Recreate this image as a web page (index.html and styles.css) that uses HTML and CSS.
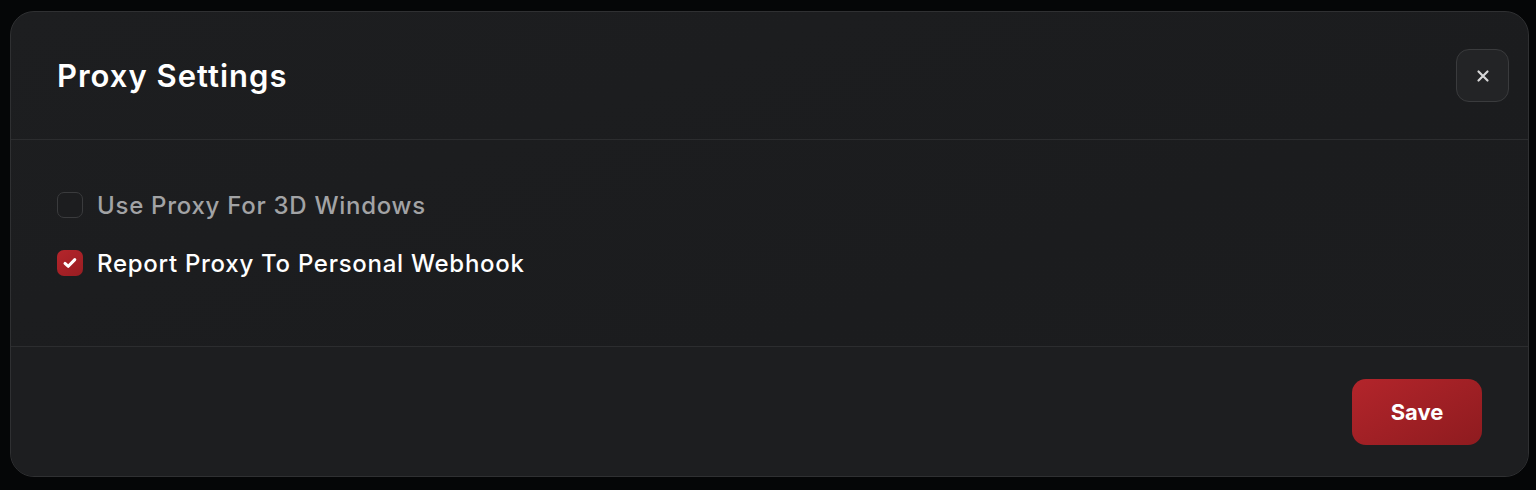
FILE: index.html
```html
<!DOCTYPE html>
<html lang="en">
<head>
<meta charset="utf-8">
<title>Proxy Settings</title>
<link rel="stylesheet" href="styles.css">
</head>
<body>
<div class="modal">
  <div class="modal-header">
    <h2 class="title">Proxy Settings</h2>
    <button class="close" aria-label="Close">
      <svg width="14" height="14" viewBox="0 0 14 14"><path d="M2.5 2.5 L11.5 11.5 M11.5 2.5 L2.5 11.5" stroke="#d6d6d7" stroke-width="2.2" stroke-linecap="round"/></svg>
    </button>
  </div>
  <div class="modal-body">
    <label class="option">
      <span class="box"></span>
      <span class="label muted">Use Proxy For 3D Windows</span>
    </label>
    <label class="option">
      <span class="box checked">
        <svg width="16" height="14" viewBox="0 0 16 14"><path d="M3 7.4 L6.3 10.3 L12.8 3.6" fill="none" stroke="#ffffff" stroke-width="3" stroke-linecap="round" stroke-linejoin="round"/></svg>
      </span>
      <span class="label">Report Proxy To Personal Webhook</span>
    </label>
  </div>
  <div class="modal-footer">
    <button class="save">Save</button>
  </div>
</div>
</body>
</html>
```
FILE: styles.css
```css
* { box-sizing: border-box; }
html, body { margin: 0; height: 100%; }
body {
  background: #050607;
  padding: 11px 7px 0 10px;
  font-family: Inter, "Noto Sans", sans-serif;
  overflow: hidden;
}
.modal {
  height: 466px;
  border: 1px solid #2f3032;
  border-radius: 24px;
  background: linear-gradient(160deg, #1d1e20 0%, #1b1c1e 60%, #1c1d1f 100%);
  display: flex;
  flex-direction: column;
  overflow: hidden;
}
.modal-header {
  height: 128px;
  display: flex;
  align-items: center;
  justify-content: space-between;
  padding: 0 19px 0 46px;
  border-bottom: 1px solid #2c2d2f;
}
.title {
  margin: 0;
  color: #ffffff;
  font-size: 31px;
  font-weight: 600;
  letter-spacing: 1px;
}
.close {
  width: 53px;
  height: 53px;
  border-radius: 13px;
  border: 1px solid #3a3b3d;
  background: #232426;
  display: flex;
  align-items: center;
  justify-content: center;
  padding: 0;
}
.modal-body {
  height: 207px;
  padding: 52px 46px 0;
  display: flex;
  flex-direction: column;
  gap: 32px;
  border-bottom: 1px solid #2c2d2f;
}
.option {
  display: flex;
  align-items: center;
  gap: 14px;
  height: 26px;
}
.box {
  width: 26px;
  height: 26px;
  border-radius: 7px;
  border: 1.5px solid #3a3b3d;
  background: #1c1d1f;
  display: flex;
  align-items: center;
  justify-content: center;
  flex: none;
}
.box.checked {
  border: none;
  background: linear-gradient(145deg, #b5252b, #981d22);
}
.label {
  color: #ffffff;
  font-size: 24px;
  font-weight: 500;
  letter-spacing: 0.72px;
}
.label.muted { color: #a2a3a5; }
.modal-footer {
  flex: 1;
  display: flex;
  align-items: center;
  justify-content: flex-end;
  padding: 0 46px;
  background: #1d1e20;
}
.save {
  width: 130px;
  height: 66px;
  border: none;
  border-radius: 14px;
  background: linear-gradient(150deg, #b3252b 0%, #8e1b1f 100%);
  color: #ffffff;
  font-family: Inter, "Noto Sans", sans-serif;
  font-size: 22px;
  font-weight: 700;
}
```
